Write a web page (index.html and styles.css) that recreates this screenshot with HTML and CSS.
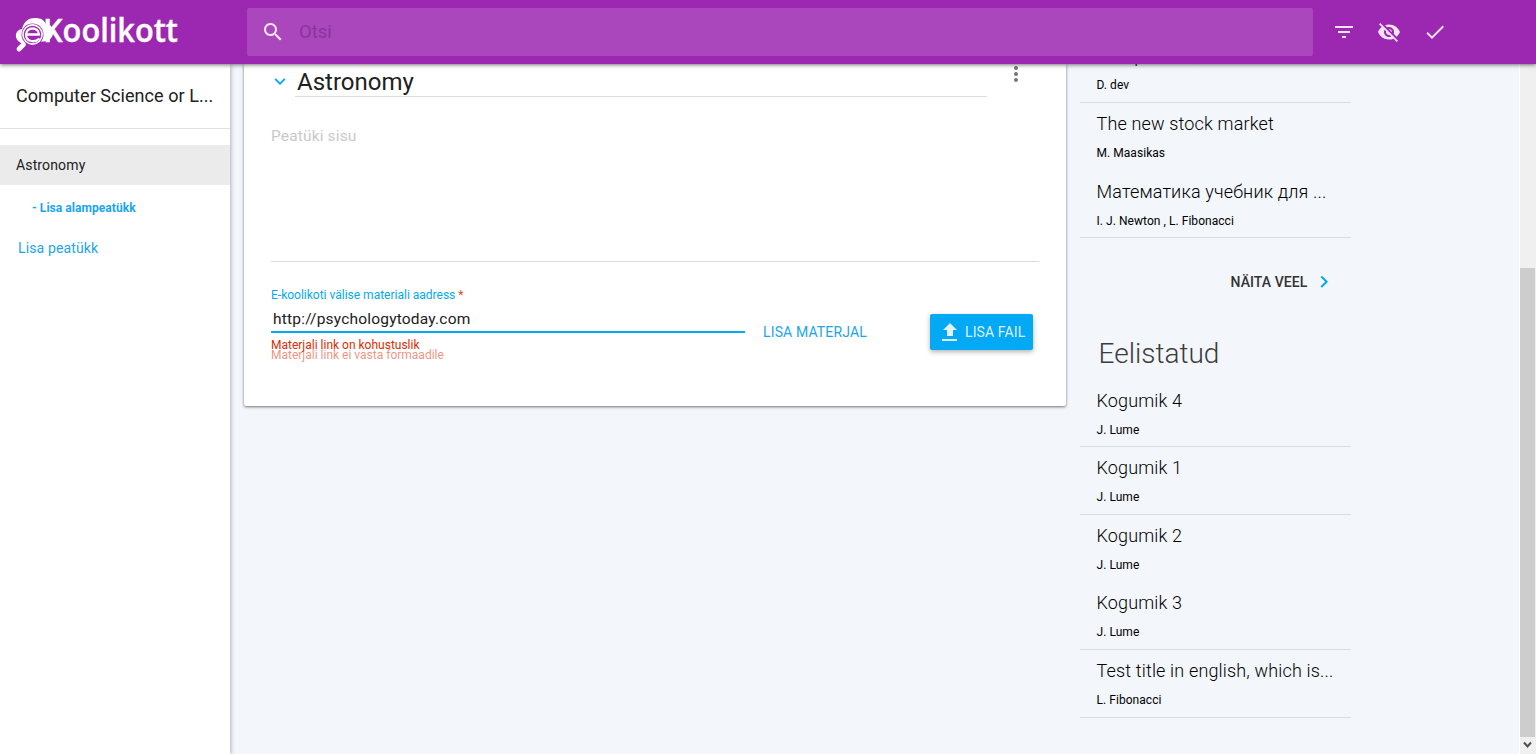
FILE: index.html
```html
<!DOCTYPE html>
<html lang="et">
<head>
<meta charset="utf-8">
<title>e-Koolikott</title>
<link rel="stylesheet" href="styles.css">
</head>
<body>
<header class="toolbar">
  <div class="brand">
    <svg class="logo" width="166" height="40" viewBox="0 0 166 40">
      <path fill="#fff" d="M6 31C-1 28-1 18 7 17C9 9 14 6 20 6C26 6 29 8 31 12C36 12 39 17 38 22C37 27 33 29.500 27 29.500Z"/>
      <circle cx="17.500" cy="22.500" r="11" fill="#9c27b0"/>
      <circle cx="17.500" cy="22.500" r="9.600" fill="none" stroke="#fff" stroke-width="1.600"/>
      <path d="M11 22.500H24C23.500 14.500 11.500 14.500 11 22.500C11 30 20 31 24.500 26.500" fill="none" stroke="#fff" stroke-width="2.300"/>
      <path d="M8.500 32.500L4 37" stroke="#fff" stroke-width="4.800" stroke-linecap="round"/>
      <text class="logo-text" x="28" y="30" textLength="135" lengthAdjust="spacingAndGlyphs">Koolikott</text>
    </svg>
  </div>
  <div class="search">
    <svg width="24" height="24" viewBox="0 0 24 24"><path d="M15.500 14h-.79l-.28-.27C15.410 12.590 16 11.110 16 9.500 16 5.910 13.090 3 9.500 3S3 5.910 3 9.500 5.910 16 9.500 16c1.610 0 3.090-.59 4.230-1.570l.27.28v.79l5 4.990L20.490 19l-4.990-5zm-6 0C7.010 14 5 11.990 5 9.500S7.010 5 9.500 5 14 7.010 14 9.500 11.990 14 9.500 14z"/></svg>
    <span>Otsi</span>
  </div>
  <nav class="actions">
    <svg width="24" height="24" viewBox="0 0 24 24"><path d="M10 18h4v-2h-4v2zM3 6v2h18V6H3zm3 7h12v-2H6v2z"/></svg>
    <svg width="24" height="24" viewBox="0 0 24 24"><path d="M12 7c2.760 0 5 2.240 5 5 0 .65-.13 1.260-.36 1.830l2.920 2.920c1.510-1.260 2.700-2.890 3.430-4.750-1.730-4.390-6-7.500-11-7.500-1.400 0-2.740.25-3.980.7l2.160 2.160C10.740 7.130 11.350 7 12 7zM2 4.270l2.280 2.280.46.46C3.080 8.300 1.780 10.020 1 12c1.730 4.390 6 7.500 11 7.500 1.550 0 3.030-.3 4.380-.84l.42.42L19.730 22 21 20.730 3.270 3 2 4.270zM7.530 9.800l1.550 1.550c-.05.21-.08.43-.08.65 0 1.660 1.340 3 3 3 .22 0 .44-.03.65-.08l1.550 1.550c-.67.33-1.410.53-2.200.53-2.760 0-5-2.240-5-5 0-.79.2-1.530.53-2.200zm4.310-.78l3.150 3.150.02-.16c0-1.660-1.340-3-3-3l-.17.01z"/></svg>
    <svg width="24" height="24" viewBox="0 0 24 24"><path d="M9 16.170L4.830 12l-1.420 1.410L9 19 21 7l-1.410-1.410z"/></svg>
  </nav>
</header>
<div class="body">
  <aside class="sidebar">
    <h1 class="side-title">Computer Science or L...</h1>
    <a class="chapter">Astronomy</a>
    <a class="add-sub">- Lisa alampeatükk</a>
    <a class="add-chapter">Lisa peatükk</a>
  </aside>
  <main class="content">
    <section class="card">
      <div class="card-head">
        <svg class="chevron" width="22" height="22" viewBox="0 0 24 24"><path d="M7.410 7.840L12 12.420l4.590-4.580L18 9.250l-6 6-6-6z"/></svg>
        <h2 class="card-title">Astronomy</h2>
        <svg class="more" width="24" height="24" viewBox="0 0 24 24"><path d="M12 8c1.100 0 2-.9 2-2s-.9-2-2-2-2 .9-2 2 .9 2 2 2zm0 2c-1.100 0-2 .9-2 2s.9 2 2 2 2-.9 2-2-.9-2-2-2zm0 6c-1.100 0-2 .9-2 2s.9 2 2 2 2-.9 2-2-.9-2-2-2z"/></svg>
      </div>
      <div class="chapter-text">Peatüki sisu</div>
      <div class="form">
        <div class="field">
          <label class="label">E-koolikoti välise materiali aadress <span class="req">*</span></label>
          <div class="value">http://psychologytoday.com</div>
          <div class="error">Materjali link on kohustuslik</div>
          <div class="error leaving">Materjali link ei vasta formaadile</div>
        </div>
        <a class="add-material">LISA MATERJAL</a>
        <button class="upload">
          <svg width="24" height="24" viewBox="0 0 24 24"><path d="M9 16h6v-6h4l-7-7-7 7h4zm-5 3h15v2H4z"/></svg>
          <span>LISA FAIL</span>
        </button>
      </div>
    </section>
    <aside class="lists">
      <ul class="list">
        <li class="line"><b>Kompuutrid,</b><i>D. dev</i></li>
        <li><b>The new stock market</b><i>M. Maasikas</i></li>
        <li class="line"><b>Математика учебник для ...</b><i>I. J. Newton , L. Fibonacci</i></li>
      </ul>
      <a class="show-more">NÄITA VEEL<svg width="24" height="24" viewBox="0 0 24 24"><path d="M8.590 16.340l4.580-4.590-4.580-4.590L10 5.750l6 6-6 6z"/></svg></a>
      <h3 class="list-title">Eelistatud</h3>
      <ul class="list">
        <li class="line"><b>Kogumik 4</b><i>J. Lume</i></li>
        <li class="line"><b>Kogumik 1</b><i>J. Lume</i></li>
        <li><b>Kogumik 2</b><i>J. Lume</i></li>
        <li class="line"><b>Kogumik 3</b><i>J. Lume</i></li>
        <li class="line"><b>Test title in english, which is...</b><i>L. Fibonacci</i></li>
      </ul>
    </aside>
  </main>
  <div class="scrollbar">
    <div class="thumb"></div>
    <svg width="15" height="16" viewBox="0 0 15 16"><path d="M4 5.500L7.500 9.500L11 5.500" fill="none" stroke="#505050" stroke-width="2"/></svg>
  </div>
</div>
</body>
</html>
```

FILE: styles.css
```css
* { box-sizing: border-box; }
body {
  margin: 0;
  height: 754px;
  display: flex;
  flex-direction: column;
  overflow: hidden;
  background: #f3f6fb;
  color: #212121;
  font-family: Roboto, "Liberation Sans", sans-serif;
}
h1, h2, h3, ul { margin: 0; padding: 0; font-weight: 400; }

.toolbar {
  position: relative;
  z-index: 2;
  flex: none;
  height: 64px;
  display: flex;
  align-items: center;
  background: #9c27b0;
  box-shadow: 0 1px 4px rgba(0, 0, 0, .55);
}
.brand { width: 247px; padding-left: 15px; height: 40px; }
.logo { display: block; overflow: visible; }
.logo-text { font: 600 33px "Open Sans", sans-serif; fill: #fff; stroke: #fff; stroke-width: .4px; }
.search {
  width: 1066px;
  height: 48px;
  padding-left: 14px;
  display: flex;
  align-items: center;
  gap: 14px;
  border-radius: 2px;
  background: #ab47bc;
  color: #8a349b;
  font-size: 18.500px;
}
.search svg, .actions svg { fill: rgba(255, 255, 255, .87); }
.actions { display: flex; gap: 21.500px; padding-left: 18.500px; }

.body { flex: 1; min-height: 0; display: flex; }
.sidebar {
  position: relative;
  z-index: 1;
  width: 230px;
  background: #fff;
  box-shadow: 0 1px 5px rgba(0, 0, 0, .4);
  display: flex;
  flex-direction: column;
}
.side-title {
  height: 65px;
  padding: 0 16px;
  margin-bottom: 16px;
  border-bottom: 1px solid #e0e0e0;
  font-size: 18px;
  line-height: 64px;
  letter-spacing: .06px;
  white-space: nowrap;
}
.chapter { height: 40px; padding-left: 16px; background: #ebebeb; font-size: 14px; line-height: 40px; letter-spacing: .14px; }
.add-sub { padding-left: 32px; color: #1ba5ef; font-size: 12px; font-weight: 700; line-height: 46px; letter-spacing: .06px; }
.add-chapter { padding-left: 18px; color: #1ba5ef; font-size: 14px; line-height: 34px; letter-spacing: .14px; }

.content { flex: 1; display: flex; gap: 14px; padding-left: 14px; overflow: hidden; }
.card {
  width: 822px;
  height: 342px;
  padding: 0 27px;
  background: #fff;
  border-radius: 0 0 2px 2px;
  box-shadow: 0 1px 3px rgba(0, 0, 0, .55);
}
.card-head { display: flex; height: 33px; margin-left: -2px; }
.chevron { margin-top: 7px; fill: #03a9f4; }
.card-title {
  width: 692px;
  margin-left: 4px;
  padding-left: 2px;
  border-bottom: 1px solid #dcdcdc;
  font-size: 24px;
  line-height: 37px;
}
.more { margin: -2px 0 0 17px; fill: #757575; }
.chapter-text {
  height: 165px;
  padding-top: 29px;
  border-bottom: 1px solid #dcdcdc;
  color: #c9c9c9;
  font-size: 15.500px;
  line-height: 20px;
  letter-spacing: .15px;
}
.form { display: flex; }
.field { width: 474px; padding-top: 25px; }
.label { display: block; color: #03a9f4; font-size: 12px; line-height: 16px; }
.req { color: #dd4b2c; }
.value {
  height: 30px;
  margin-bottom: 7px;
  padding: 1px 0 0 2px;
  border-bottom: 2px solid #03a9f4;
  font-size: 15.500px;
  line-height: 30px;
  letter-spacing: .2px;
}
.error { color: #dd2c00; font-size: 12px; line-height: 10px; }
.leaving { opacity: .5; }
.add-material { margin: 60px 0 0 18px; width: 167px; color: #1ba5ef; font-size: 14px; line-height: 20px; letter-spacing: .14px; }
.upload {
  width: 103px;
  height: 36px;
  margin-top: 52px;
  padding: 0 0 0 8px;
  display: flex;
  align-items: center;
  gap: 3px;
  border: 0;
  border-radius: 2px;
  background: #03a9f4;
  box-shadow: 0 2px 5px rgba(0, 0, 0, .3);
  color: rgba(255, 255, 255, .87);
  font: 14px Roboto, sans-serif;
  letter-spacing: .12px;
  white-space: nowrap;
}
.upload svg { flex: none; fill: rgba(255, 255, 255, .87); }

.lists { width: 271px; margin-top: -28.700px; color: #000; }
.list { list-style: none; }
.list li { height: 67.600px; padding-left: 16.500px; border-bottom: 1px solid transparent; white-space: nowrap; }
.list .line { border-bottom-color: #dadde3; }
.list b, .list i { display: block; font-style: normal; }
.list b { padding-top: 7px; font-size: 18px; font-weight: 300; line-height: 27px; letter-spacing: .16px; }
.list i { padding-top: 8px; font-size: 12px; line-height: 16px; letter-spacing: .05px; }
.show-more {
  height: 88px;
  padding-right: 15.500px;
  display: flex;
  justify-content: flex-end;
  align-items: center;
  gap: 4px;
  color: #333;
  font-size: 14px;
  font-weight: 500;
  letter-spacing: .08px;
}
.show-more svg { fill: #03a9f4; }
.list-title { height: 53.500px; padding-left: 18.500px; color: #3c3c3c; font-size: 28px; font-weight: 300; line-height: 55px; }

.scrollbar { width: 17px; padding-right: 1px; border-left: 1px solid #fff; background: #f0f0f0; display: flex; flex-direction: column; }
.thumb { height: 469px; margin-top: 204px; background: #cdcdcd; }
```
